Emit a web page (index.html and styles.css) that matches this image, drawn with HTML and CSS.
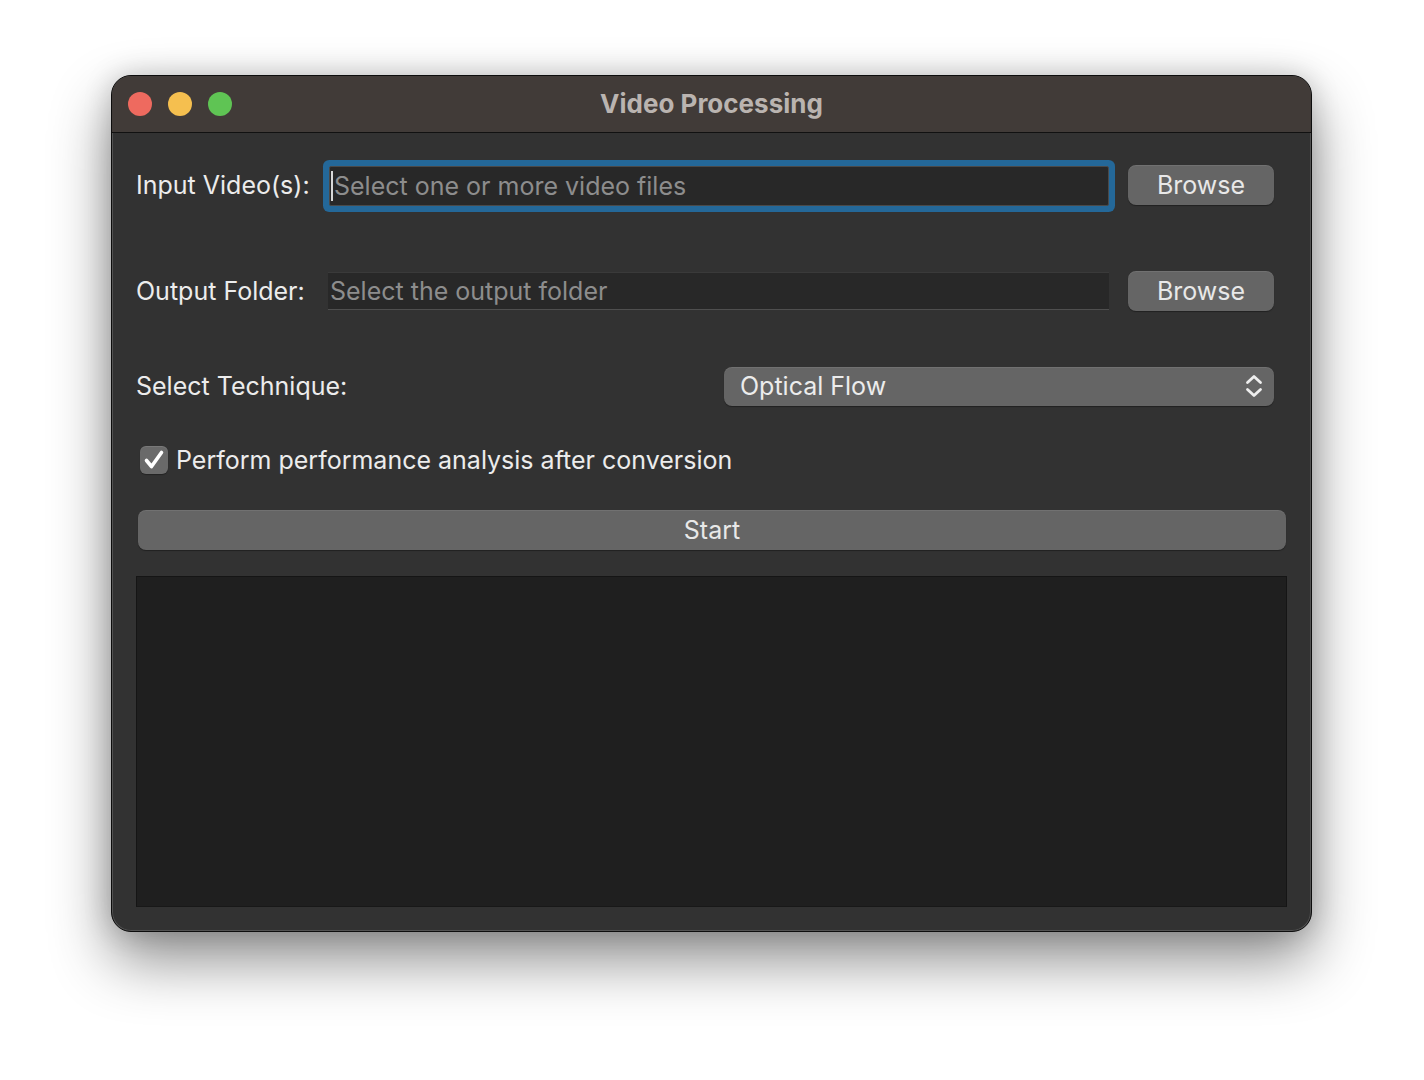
FILE: index.html
```html
<!DOCTYPE html>
<html>
<head>
<meta charset="utf-8">
<title>Video Processing</title>
<link rel="stylesheet" href="styles.css">
</head>
<body>
<div class="window">
  <div class="titlebar">
    <div class="lights">
      <span class="light red"></span>
      <span class="light yellow"></span>
      <span class="light green"></span>
    </div>
    <div class="title">Video Processing</div>
  </div>
  <div class="content">
    <div class="row row-file row-1">
      <div class="label">Input Video(s):</div>
      <div class="field focused"><span class="caret"></span><span class="placeholder">Select one or more video files</span></div>
      <div class="button">Browse</div>
    </div>
    <div class="row row-file row-2">
      <div class="label">Output Folder:</div>
      <div class="field"><span class="placeholder">Select the output folder</span></div>
      <div class="button">Browse</div>
    </div>
    <div class="row row-select">
      <div class="label">Select Technique:</div>
      <div class="select">
        <span>Optical Flow</span>
        <svg class="chev" width="18" height="26" viewBox="0 0 18 26"><path d="M2.5 9.5 L9 3.5 L15.5 9.5" fill="none" stroke="#eeeeee" stroke-width="2.8" stroke-linecap="round" stroke-linejoin="round"/><path d="M2.5 16.5 L9 22.5 L15.5 16.5" fill="none" stroke="#eeeeee" stroke-width="2.8" stroke-linecap="round" stroke-linejoin="round"/></svg>
      </div>
    </div>
    <div class="row row-check">
      <div class="checkbox">
        <svg width="28" height="28" viewBox="0 0 28 28"><path d="M6.5 14.5 L11.5 20.5 L21.5 6.5" fill="none" stroke="#ffffff" stroke-width="3.6" stroke-linecap="round" stroke-linejoin="round"/></svg>
      </div>
      <div class="check-label">Perform performance analysis after conversion</div>
    </div>
    <div class="start">Start</div>
    <div class="log"></div>
  </div>
</div>
</body>
</html>
```

FILE: styles.css
```css
html, body {
  margin: 0;
  padding: 0;
  background: #ffffff;
}
body {
  width: 1424px;
  height: 1080px;
  overflow: hidden;
  font-family: Inter, "Noto Sans", "Liberation Sans", sans-serif;
}
.window {
  margin: 75px 0 0 111px;
  width: 1201px;
  height: 857px;
  box-sizing: border-box;
  border-radius: 20px;
  background: #323232;
  border: 1px solid #0d0d0d;
  box-shadow: 0 28px 60px rgba(0, 0, 0, 0.45), 0 0 28px rgba(0, 0, 0, 0.18), inset 0 0 0 1px rgba(255, 255, 255, 0.16);
  overflow: hidden;
  display: flex;
  flex-direction: column;
}
.titlebar {
  height: 56px;
  flex: none;
  background: #413b38;
  border-bottom: 1px solid #111111;
  position: relative;
  display: flex;
  align-items: center;
  justify-content: center;
}
.lights {
  position: absolute;
  left: 16px;
  top: 16px;
  display: flex;
  gap: 16px;
}
.light {
  width: 24px;
  height: 24px;
  border-radius: 50%;
}
.red { background: #ee6a5f; }
.yellow { background: #f5bf4f; }
.green { background: #5fc454; }
.title {
  color: #bab4b0;
  font-weight: 700;
  font-size: 26px;
  margin-top: -1px;
}
.content {
  padding: 0 24px 0 24px;
  display: flex;
  flex-direction: column;
  flex: 1;
}
.row {
  display: grid;
  align-items: center;
  margin-right: 13px;
}
.row-file {
  grid-template-columns: 173px 1fr 146px;
  column-gap: 19px;
}
.row-1 {
  margin-top: 25px;
  height: 54px;
}
.row-2 {
  margin-top: 54px;
  height: 50px;
}
.label {
  color: #ececec;
  font-size: 25px;
  white-space: nowrap;
}
.field {
  height: 36px;
  background: #282828;
  border-top: 1px solid #3a3a3a;
  border-bottom: 1px solid #4f4f4f;
  display: flex;
  align-items: center;
  position: relative;
}
.field.focused {
  height: 38px;
  margin-top: 1px;
  border: 1px solid #4a4a4a;
  border-radius: 2px;
  box-shadow: 0 0 0 6px #246899;
  margin-left: 1px;
}
.placeholder {
  color: #8d8d8d;
  font-size: 25px;
  padding-left: 2px;
  white-space: nowrap;
}
.focused .placeholder {
  padding-left: 1px;
}
.caret {
  width: 2px;
  height: 30px;
  background: #d8d8d8;
  margin-left: 1px;
}
.button {
  height: 40px;
  border-radius: 8px;
  background: #656565;
  box-shadow: 0 1px 1px rgba(0, 0, 0, 0.35), inset 0 1px 0 rgba(255, 255, 255, 0.08);
  color: #e8e8e8;
  font-size: 25px;
  display: flex;
  align-items: center;
  justify-content: center;
}
.row-select {
  margin-top: 48px;
  height: 44px;
  grid-template-columns: 1fr 550px;
}
.select {
  height: 39px;
  border-radius: 8px;
  background: #656565;
  box-shadow: 0 1px 1px rgba(0, 0, 0, 0.35), inset 0 1px 0 rgba(255, 255, 255, 0.08);
  color: #ececec;
  font-size: 25px;
  display: flex;
  align-items: center;
  justify-content: space-between;
  padding: 0 11px 0 16px;
}
.chev {
  display: block;
}
.row-check {
  margin-top: 38px;
  height: 28px;
  display: flex;
  align-items: center;
  padding-left: 4px;
}
.checkbox {
  width: 28px;
  height: 28px;
  border-radius: 6px;
  background: #6a6a6a;
  box-shadow: inset 0 1px 0 rgba(255, 255, 255, 0.1), 0 1px 1px rgba(0, 0, 0, 0.3);
  flex: none;
}
.checkbox svg {
  display: block;
}
.check-label {
  margin-left: 8px;
  color: #ececec;
  font-size: 25px;
  white-space: nowrap;
}
.start {
  margin: 36px 1px 0 2px;
  height: 40px;
  border-radius: 8px;
  background: #656565;
  box-shadow: 0 1px 1px rgba(0, 0, 0, 0.35), inset 0 1px 0 rgba(255, 255, 255, 0.08);
  color: #e8e8e8;
  font-size: 25px;
  display: flex;
  align-items: center;
  justify-content: center;
}
.log {
  margin-top: 26px;
  height: 331px;
  box-sizing: border-box;
  background: #1f1f1f;
  border: 1px solid #151515;
  border-bottom-color: #181818;
}
```
